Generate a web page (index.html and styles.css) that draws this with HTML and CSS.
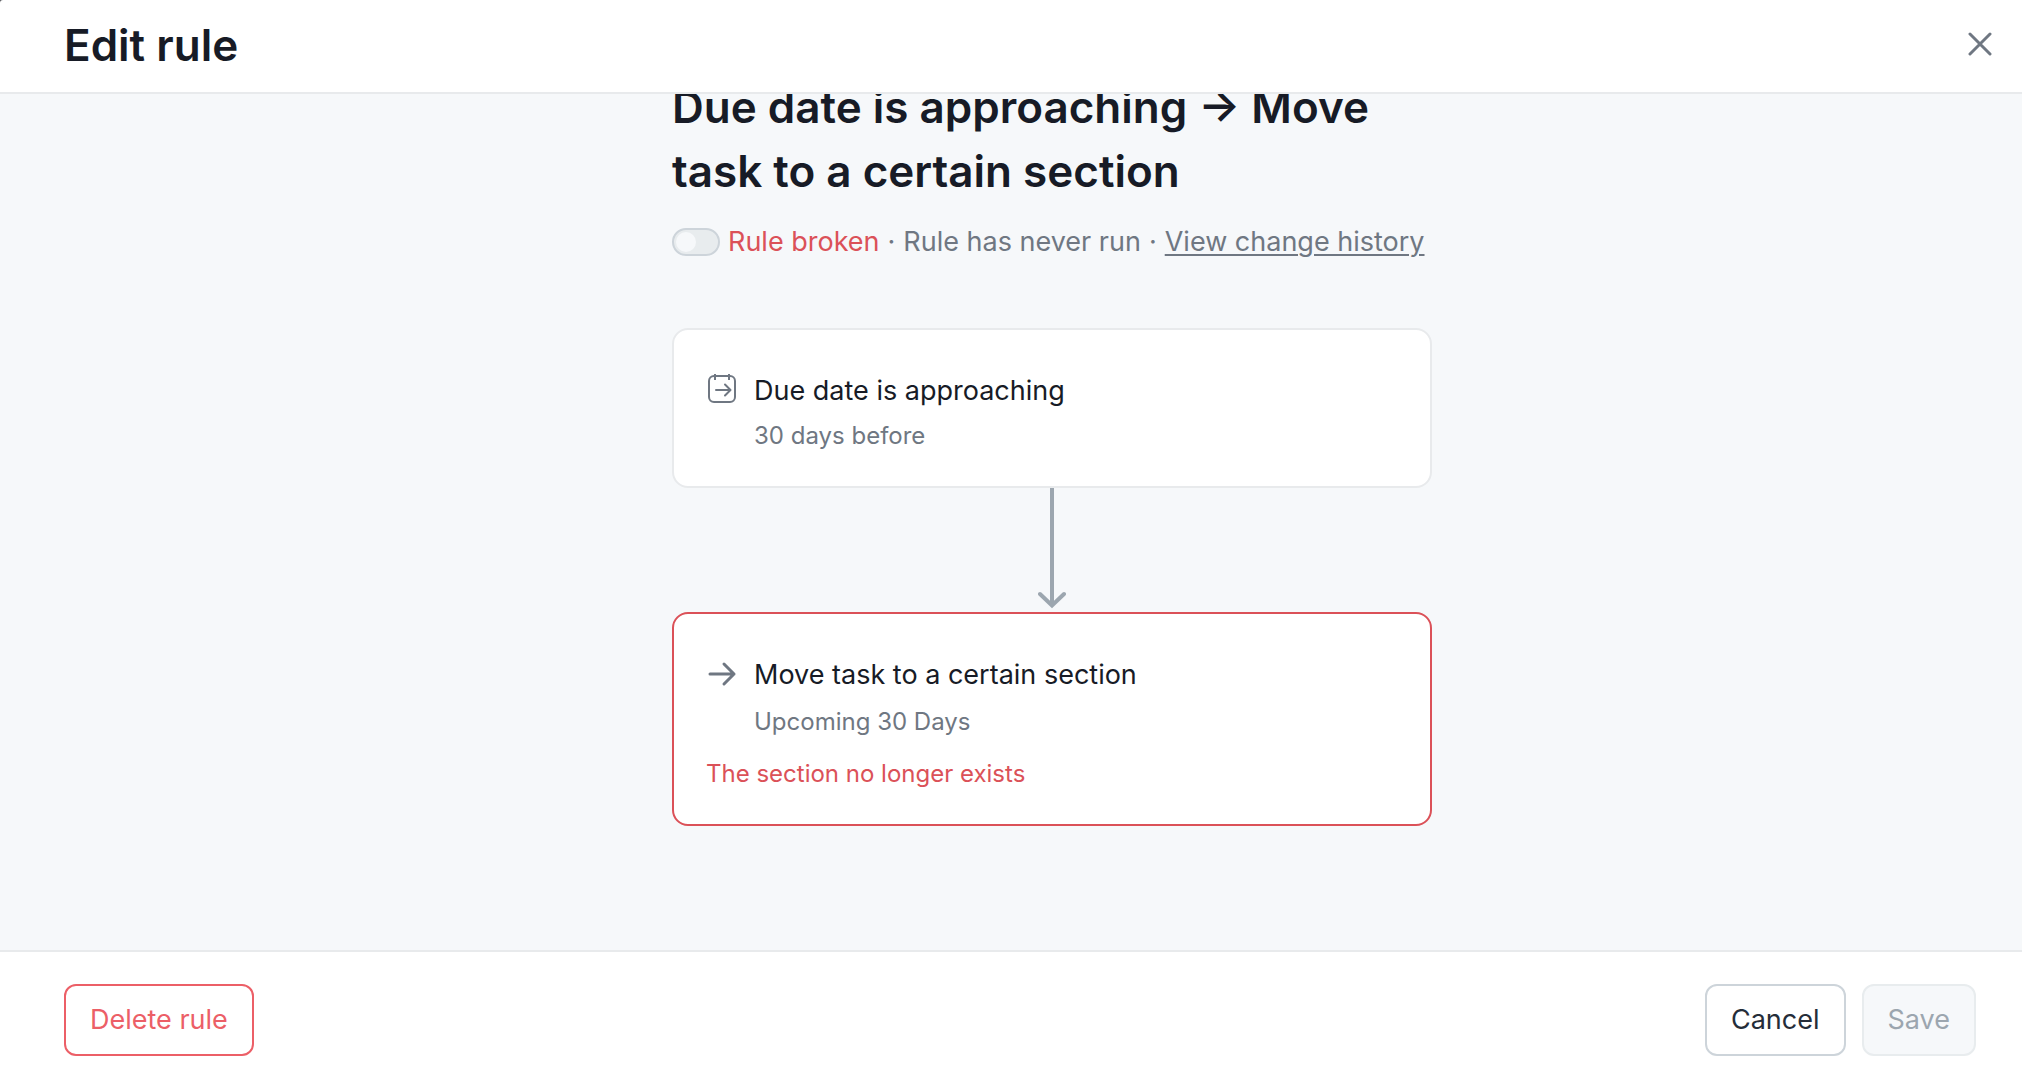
FILE: index.html
```html
<!DOCTYPE html>
<html lang="en">
<head>
<meta charset="utf-8">
<meta name="viewport" content="width=device-width, initial-scale=1">
<title>Edit rule</title>
<link rel="stylesheet" href="styles.css">
</head>
<body>
<div class="dialog">
  <header class="header">
    <h1 class="header-title">Edit rule</h1>
    <button class="close" type="button" aria-label="Close">
      <svg width="24" height="24" viewBox="0 0 24 24" fill="none" stroke="currentColor" stroke-width="3" stroke-linecap="round"><path d="M2 2l20 20M22 2L2 22"/></svg>
    </button>
  </header>
  <main class="canvas">
    <div class="column">
      <h2 class="rule-title">Due date is approaching → Move task to a certain section</h2>
      <div class="status">
        <input class="switch" type="checkbox" id="rule-on" disabled>
        <label class="broken" for="rule-on">Rule broken</label>
        <span>·</span>
        <span>Rule has never run</span>
        <span>·</span>
        <a class="history" href="#history">View change history</a>
      </div>
      <section class="card">
        <svg class="icon" width="32" height="32" viewBox="0 0 32 32" fill="none" stroke="currentColor" stroke-width="2" stroke-linecap="round" stroke-linejoin="round"><rect x="3" y="5" width="26" height="26" rx="5"/><path d="M9 3v6M23 3v6" stroke-linecap="butt"/><path d="M10 19h14M19 13.500l5.500 5.500-5.500 5.500"/></svg>
        <h3 class="card-title">Due date is approaching</h3>
        <p class="card-detail">30 days before</p>
      </section>
      <svg class="connector" width="28" height="124" viewBox="0 0 28 124" fill="none" stroke="currentColor" stroke-width="4"><path d="M14 0v117"/><path d="M2 106l12 11.500 12-11.500" stroke-linecap="round"/></svg>
      <section class="card card-error">
        <svg class="icon" width="32" height="32" viewBox="0 0 32 32" fill="none" stroke="currentColor" stroke-width="3" stroke-linecap="round" stroke-linejoin="round"><path d="M4 19h24M18 9l10 10-10 10"/></svg>
        <h3 class="card-title">Move task to a certain section</h3>
        <p class="card-detail">Upcoming 30 Days</p>
        <p class="error">The section no longer exists</p>
      </section>
    </div>
  </main>
  <footer class="footer">
    <button class="button danger" type="button">Delete rule</button>
    <div class="actions">
      <button class="button" type="button">Cancel</button>
      <button class="button" type="button" disabled>Save</button>
    </div>
  </footer>
</div>
</body>
</html>
```
FILE: styles.css
```css
* { box-sizing: border-box; }

body {
  margin: 0;
  background: #55575c;
  color: #171b26;
  font-family: Inter, "Liberation Sans", sans-serif;
  font-size: 27px;
  line-height: 40px;
}

h1, h2, h3, p { margin: 0; font-weight: 400; }

.dialog {
  display: flex;
  flex-direction: column;
  height: 100vh;
  background: #fff;
  border-top-left-radius: 3px;
}

.header {
  display: flex;
  align-items: center;
  justify-content: space-between;
  padding: 13px 22px 15px 64px;
  border-bottom: 2px solid #e8eaec;
}

.header-title,
.rule-title {
  font-size: 44px;
  font-weight: 600;
  line-height: 64px;
}

.close {
  display: flex;
  margin-bottom: 2px;
  padding: 8px;
  border: 0;
  background: none;
  color: #6f7782;
}

.canvas {
  flex: 1;
  min-height: 0;
  overflow: hidden;
  padding-left: 82px;
  background: #f6f8fa;
}

.column {
  display: flex;
  flex-direction: column;
  width: 100%;
  max-width: 760px;
  margin: -19px auto 0;
}

.status {
  display: flex;
  align-items: center;
  gap: 8px;
  margin: 19px 0 66px;
  color: #6f7782;
  white-space: nowrap;
}

.switch {
  appearance: none;
  flex: none;
  width: 48px;
  height: 28px;
  margin: 0;
  padding: 2px;
  border: 2px solid #cdd4da;
  border-radius: 14px;
  background: #e8ecee;
}

.switch::before {
  content: "";
  display: block;
  width: 20px;
  height: 20px;
  border-radius: 50%;
  background: #f6f8fa;
}

.broken { color: #db5158; }

.history {
  color: inherit;
  text-decoration-thickness: 2px;
  text-underline-offset: 3px;
}

.card {
  display: grid;
  grid-template-columns: 32px 1fr;
  column-gap: 16px;
  align-items: start;
  padding: 41px 32px 32px;
  border: 2px solid #e8eaec;
  border-radius: 16px;
  background: #fff;
}

.icon { color: #6f7782; }

.card-title { font-size: 27px; }

.card-detail {
  grid-column: 2;
  margin-top: 7px;
  color: #6f7782;
  font-size: 24px;
  line-height: 36px;
}

.connector {
  align-self: center;
  color: #9ca6af;
}

.card-error { border-color: #db5158; }

.card-error .card-detail { margin-top: 9px; }

.error {
  grid-column: 1 / -1;
  margin-top: 16px;
  color: #db5158;
  font-size: 24px;
  line-height: 36px;
}

.footer {
  display: flex;
  justify-content: space-between;
  padding: 32px 46px 24px 64px;
  border-top: 2px solid #e8eaec;
}

.actions { display: flex; gap: 16px; }

.button {
  height: 72px;
  padding: 0 24px;
  border: 2px solid #cdd4da;
  border-radius: 12px;
  background: #fff;
  color: #252d39;
  font: inherit;
}

.button:disabled {
  border-color: #e8ecee;
  background: #f6f8fa;
  color: #9ca6af;
}

.danger {
  border-color: #ec5f67;
  color: #ec5f67;
}
```
